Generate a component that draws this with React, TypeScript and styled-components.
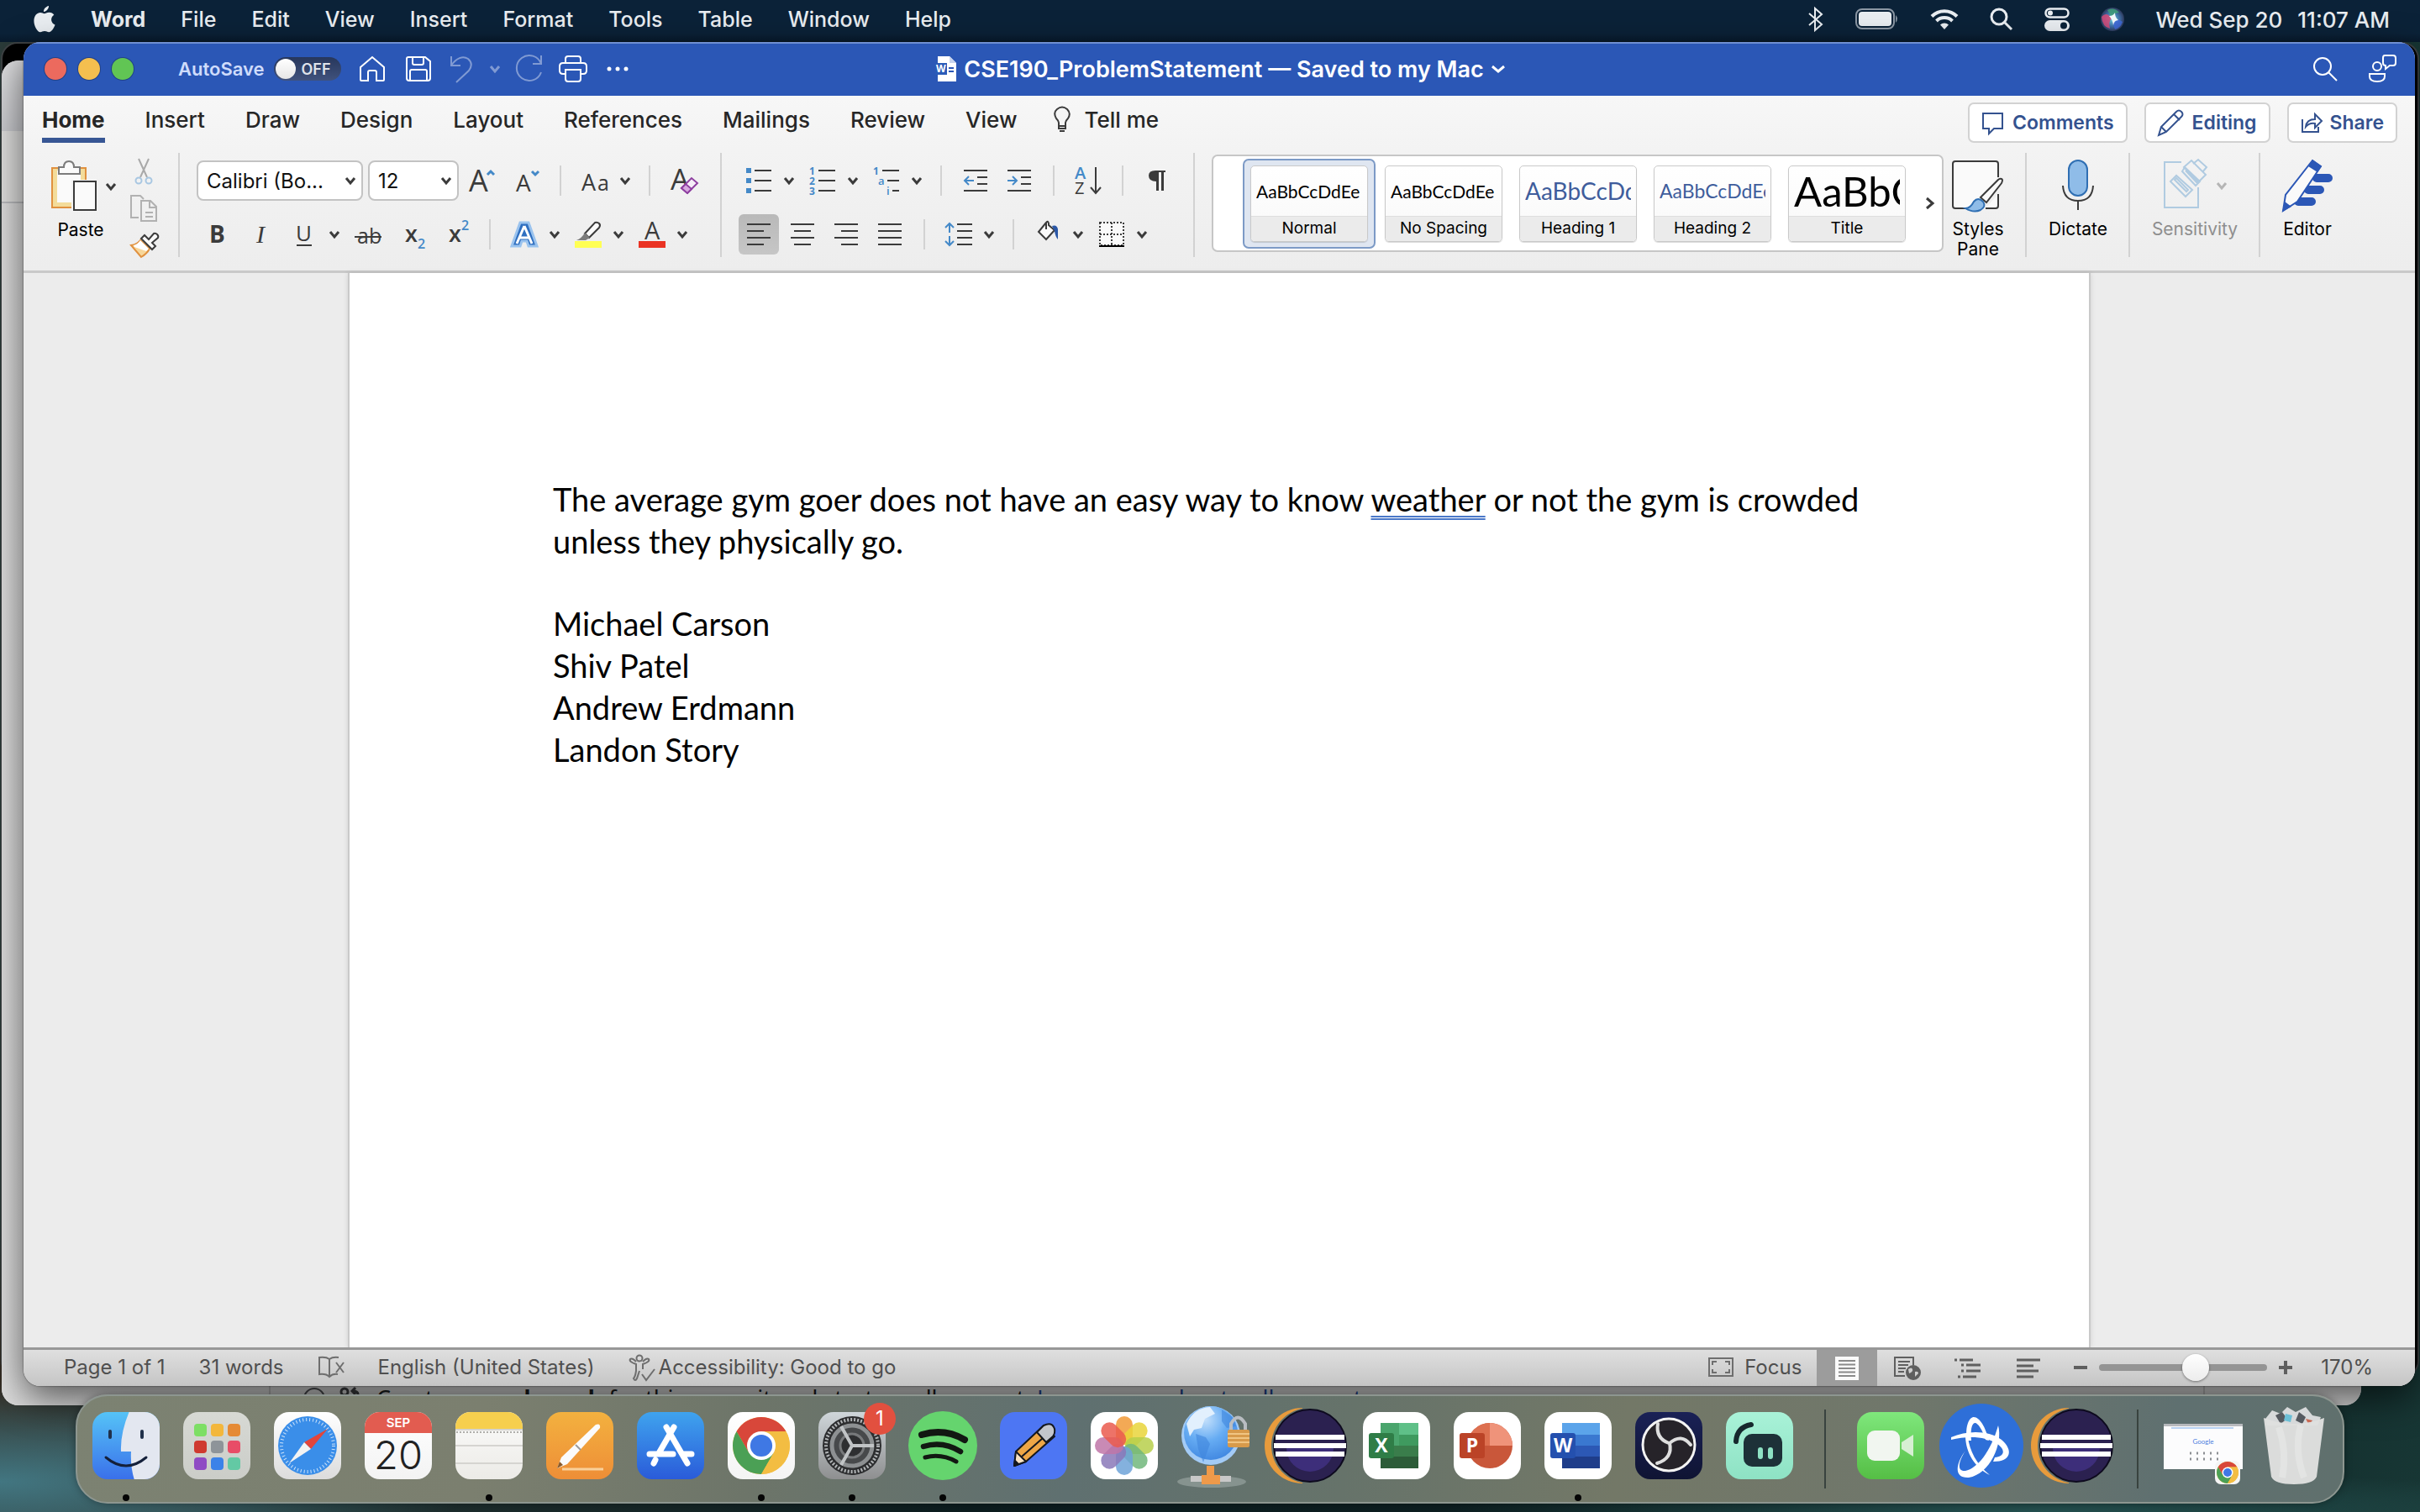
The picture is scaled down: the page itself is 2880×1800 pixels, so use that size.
import React from "react";
import styled, { createGlobalStyle, css } from "styled-components";

const ui = `Inter, "Liberation Sans", sans-serif`;
const doc = `Lato, "Open Sans", sans-serif`;
const ink = "#3b3b3b";
const blue = "#4489c8";
const brand = "#2b57b6";

const GlobalStyle = createGlobalStyle`
  * { box-sizing: border-box; }
  html, body, #root { height: 100%; }
  body { margin: 0; overflow: hidden; font-family: ${ui}; font-size: 24px; background: #0c1c1e; }
  button, select, input { font: inherit; color: inherit; margin: 0; padding: 0; border: 0; background: none; }
  svg { display: block; flex: none; overflow: visible; }
  a { color: inherit; text-decoration: none; }
  p, h1 { margin: 0; font: inherit; }
`;

/* ---------- Desktop ---------- */

const Desktop = styled.div`
  position: relative;
  height: 100%;
  min-height: 900px;
  overflow: hidden;
  background:
    radial-gradient(ellipse 560px 120px at 0% 98%, #427681 0%, rgba(66, 118, 129, 0) 100%),
    radial-gradient(ellipse 700px 50px at 84% 100%, #24504f 0%, rgba(36, 80, 79, 0) 100%),
    radial-gradient(ellipse 400px 200px at 0% 92%, #33291f 0%, rgba(51, 41, 31, 0) 100%),
    linear-gradient(90deg, #2a3a38 0%, #0c1c1e 40%, #0d2022 80%, #173634 100%);
`;

const MenuBar = styled.header`
  display: flex;
  justify-content: space-between;
  align-items: center;
  height: 50px;
  padding: 0 36px 4px 40px;
  background: linear-gradient(#0b2238 80%, #081a2c);
  color: #e9edf1;
  font-size: 25px;
  font-weight: 500;
`;

const MenuGroup = styled.nav<{ $gap: number }>`
  display: flex;
  align-items: center;
  gap: ${(p) => p.$gap}px;
  white-space: nowrap;
`;

const MenuItem = styled.button<{ $strong?: boolean }>`
  font-weight: ${(p) => (p.$strong ? 700 : 500)};
`;

const Clock = styled.time`
  display: flex;
  gap: 18px;
  font-size: 26px;
`;

const WindowFrame = styled.section`
  position: absolute;
  overflow: hidden;
  border-radius: 20px;
`;

const DarkWindow = styled(WindowFrame)`
  top: 50px;
  left: 1px;
  right: 1px;
  bottom: 160px;
  background: #000;
  border: 2px solid #3d4143;
`;

const BrowserWindow = styled(WindowFrame)`
  top: 72px;
  left: 2px;
  right: 70px;
  bottom: 127px;
  display: flex;
  flex-direction: column;
  background: #d3d4d8;
`;

const BrowserTabs = styled.div`
  height: 84px;
  flex: none;
  background: linear-gradient(#e0e0e2, #c9cace);
`;

const BrowserToolbar = styled.div`
  height: 86px;
  flex: none;
  background: #dededd;
  border-bottom: 2px solid #b9babd;
`;

const BrowserBody = styled.div`
  flex: 1;
  display: grid;
  grid-template-columns: 318px minmax(0, 1fr) 188px;
  background: linear-gradient(90deg, #dcdcdc, #d0d0d0 160px);
`;

const BrowserColumn = styled.div`
  display: flex;
  align-items: flex-end;
  padding: 0 0 0 38px;
  border-left: 2px solid #b2b2b2;
  &:first-child { border-left: 0; }
`;

const CommitChoice = styled.p`
  display: flex;
  align-items: center;
  gap: 16px;
  height: 38px;
  margin-bottom: -11px;
  font-family: "Noto Sans", sans-serif;
  font-size: 27px;
  line-height: 38px;
  white-space: nowrap;
  color: #1b1d20;
  a { color: #1d4490; }
`;

/* ---------- Word window ---------- */

const WordWindow = styled(WindowFrame)`
  top: 50px;
  left: 28px;
  right: 6px;
  bottom: 150px;
  display: flex;
  flex-direction: column;
  background: #ececec;
  box-shadow: 0 14px 44px rgba(0, 0, 0, 0.6), 0 0 2px rgba(0, 0, 0, 0.7);
`;

const TitleBar = styled.div`
  display: grid;
  grid-template-columns: 1fr auto 1fr;
  align-items: center;
  height: 64px;
  flex: none;
  padding: 0 22px 2px 25px;
  border-top: 2px solid #6f8fd2;
  background: ${brand};
  color: #fff;
`;

const TitleLeft = styled.div`
  display: flex;
  align-items: center;
  gap: 53px;
`;

const Lights = styled.div`
  display: flex;
  gap: 14px;
`;

const Light = styled.button<{ $color: string }>`
  width: 26px;
  height: 26px;
  border-radius: 50%;
  background: ${(p) => p.$color};
  box-shadow: 0 0 0 1px rgba(0, 0, 0, 0.25);
`;

const QuickTools = styled.div`
  display: flex;
  align-items: center;
  gap: 5px;
`;

const AutoSaveLabel = styled.label`
  display: flex;
  align-items: center;
  gap: 11px;
  color: #cfdcfb;
  font-size: 22px;
  font-weight: 600;
`;

const Toggle = styled.input`
  appearance: none;
  display: flex;
  align-items: center;
  width: 80px;
  height: 28px;
  border-radius: 14px;
  background: linear-gradient(#27375c, #40527d);
  &::before {
    content: "";
    width: 24px;
    height: 24px;
    margin: 0 7px 0 2px;
    border-radius: 50%;
    background: linear-gradient(#fff, #e6e6e6);
  }
  &::after {
    content: "OFF";
    color: #dfe3ea;
    font-size: 18px;
    font-weight: 600;
  }
`;

const TitleButton = styled.button<{ $w: number; $dim?: boolean }>`
  display: flex;
  justify-content: center;
  width: ${(p) => p.$w}px;
  opacity: ${(p) => (p.$dim ? 0.4 : 1)};
`;

const DocTitle = styled.h1`
  display: flex;
  align-items: center;
  gap: 8px;
  font-size: 27px;
  font-weight: 600;
  white-space: nowrap;
`;

const TitleRight = styled.div`
  display: flex;
  justify-content: flex-end;
  align-items: center;
  gap: 36px;
`;

const RibbonTop = styled.div`
  display: flex;
  justify-content: space-between;
  align-items: flex-start;
  height: 64px;
  flex: none;
  padding: 0 21px 0 22px;
  background: linear-gradient(#f7f7f7, #f3f3f3);
`;

const Tabs = styled.nav`
  display: flex;
  gap: 48px;
`;

const Tab = styled.button<{ $active?: boolean }>`
  display: flex;
  align-items: center;
  gap: 14px;
  height: 56px;
  color: #262626;
  font-size: 26px;
  font-weight: ${(p) => (p.$active ? 700 : 500)};
  white-space: nowrap;
  border-top: 6px solid transparent;
  border-bottom: 6px solid transparent;
  ${(p) =>
    p.$active &&
    css`
      border-image: linear-gradient(transparent 50%, #375694 50%) 6;
    `}
`;

const TellMe = styled(Tab)`
  margin-left: -6px;
`;

const Actions = styled.div`
  display: flex;
  gap: 20px;
  padding-top: 8px;
`;

const ActionButton = styled.button`
  display: flex;
  align-items: center;
  gap: 9px;
  height: 48px;
  padding: 0 14px;
  border: 2px solid #d2d2d2;
  border-radius: 7px;
  background: #fff;
  color: #34528f;
  font-size: 23px;
  font-weight: 600;
`;

const Ribbon = styled.div`
  display: flex;
  height: 147px;
  flex: none;
  padding: 4px 0 16px;
  background: linear-gradient(#f3f3f3, #ededed);
  border-bottom: 3px solid #c9c9c9;
`;

const Group = styled.div`
  display: flex;
  align-items: flex-start;
  gap: 5px;
  padding: 0 19px 0 20px;
  border-right: 2px solid #d2d2d2;
  &:last-child { border-right: 0; }
`;

const Rows = styled.div`
  display: flex;
  flex-direction: column;
  gap: 16px;
  padding-top: 9px;
`;

const Row = styled.div`
  display: flex;
  align-items: center;
  gap: 4px;
  height: 48px;
`;

const Tool = styled.button<{ $on?: boolean }>`
  display: flex;
  align-items: center;
  justify-content: center;
  width: 48px;
  height: 48px;
  border-radius: 6px;
  background: ${(p) => (p.$on ? "linear-gradient(#b9b9b9, #c6c6c6)" : "none")};
`;

const Split = styled.div`
  display: flex;
  align-items: center;
`;

const DropArrow = styled.button`
  display: flex;
  align-items: center;
  justify-content: center;
  width: 24px;
  height: 48px;
`;

const Divider = styled.span`
  width: 26px;
  height: 36px;
  background: linear-gradient(#d2d2d2, #d2d2d2) center / 2px 100% no-repeat;
`;

const Combos = styled.div`
  display: flex;
  gap: 6px;
`;

const Combo = styled.label<{ $w: number }>`
  position: relative;
  display: flex;
  align-items: center;
  width: ${(p) => p.$w}px;
  height: 48px;
  svg { position: absolute; right: 8px; pointer-events: none; }
`;

const ComboSelect = styled.select`
  appearance: none;
  width: 100%;
  height: 100%;
  padding: 0 30px 0 10px;
  border: 2px solid #c3c3c3;
  border-radius: 8px;
  background: #fff;
  color: #111;
  font-size: 24px;
`;

const PasteButton = styled.button`
  display: flex;
  flex-direction: column;
  align-items: center;
  gap: 8px;
  width: 96px;
  padding-top: 9px;
  font-size: 21px;
  color: #000;
`;

const ClipTools = styled.div`
  display: flex;
  flex-direction: column;
  align-items: center;
  gap: 10px;
  width: 44px;
  padding-top: 5px;
`;

const ClipTool = styled(Tool)`
  width: 44px;
  height: 34px;
`;

const StylesGroup = styled(Group)`
  gap: 4px;
`;

const Gallery = styled.div`
  display: flex;
  align-items: center;
  gap: 2px;
  height: 116px;
  margin-top: 2px;
  padding: 0 8px 0 35px;
  border: 2px solid #c6c6c6;
  border-radius: 7px;
  background: #fff;
`;

const StyleCard = styled.button<{ $on?: boolean }>`
  width: 158px;
  height: 107px;
  padding: 6px 7px;
  border: 2px solid ${(p) => (p.$on ? "#7c9ac6" : "transparent")};
  border-radius: 7px;
  background: ${(p) => (p.$on ? "#dfe6f1" : "none")};
`;

const CardInner = styled.span`
  display: grid;
  grid-template-rows: 1fr 30px;
  height: 91px;
  overflow: hidden;
  border: 1px solid #c9c9c9;
  border-radius: 5px;
  background: linear-gradient(#fff, #f8f8f8);
  box-shadow: 0 1px 1px rgba(0, 0, 0, 0.15);
`;

const Sample = styled.span<{ $size: number; $color: string }>`
  display: flex;
  align-items: center;
  margin: 0 6px;
  overflow: hidden;
  white-space: nowrap;
  font-family: ${doc};
  font-size: ${(p) => p.$size}px;
  color: ${(p) => p.$color};
`;

const CardLabel = styled.span`
  border-top: 1px solid #dedede;
  background: #ebebeb;
  color: #000;
  font-size: 19px;
  line-height: 28px;
  text-align: center;
`;

const GalleryNext = styled.button`
  padding-left: 12px;
`;

const BigTool = styled.button<{ $w: number; $dim?: boolean }>`
  display: flex;
  flex-direction: column;
  align-items: center;
  gap: 8px;
  width: ${(p) => p.$w}px;
  padding-top: 7px;
  color: ${(p) => (p.$dim ? "#8e8e8e" : "#000")};
  font-size: 21px;
  line-height: 24px;
`;

const IconRow = styled.span`
  display: flex;
  align-items: center;
  gap: 9px;
`;

const PasteIcons = styled(IconRow)`
  padding-left: 7px;
`;

/* ---------- Document ---------- */

const Canvas = styled.main`
  display: flex;
  justify-content: center;
  flex: 1;
  min-height: 0;
  padding: 0 20px;
  background: #ececec;
`;

const Page = styled.article`
  width: 100%;
  max-width: 2074px;
  padding: 244px 243px 0 242px;
  border: 2px solid #c9c9c9;
  border-width: 0 2px;
  background: #fff;
  box-shadow: 0 0 6px rgba(0, 0, 0, 0.12);
  color: #000;
  font-family: ${doc};
  font-size: 38px;
  line-height: 50px;
`;

const BlankLine = styled.p`
  height: 48px;
`;

const Grammar = styled.span`
  text-decoration: underline double #4a78c8;
  text-decoration-thickness: 2px;
  text-underline-offset: 5px;
`;

/* ---------- Status bar ---------- */

const StatusBar = styled.footer`
  display: flex;
  justify-content: space-between;
  height: 46px;
  flex: none;
  padding: 0 50px 2px 48px;
  border-top: 3px solid #989898;
  background: linear-gradient(#dfdfdf, #c5c5c5);
  color: #4f4f4f;
  font-size: 24px;
`;

const StatusSide = styled.div<{ $gap: number }>`
  display: flex;
  align-items: center;
  gap: ${(p) => p.$gap}px;
  white-space: nowrap;
`;

const StatusButton = styled.button<{ $gap?: number }>`
  display: flex;
  align-items: center;
  gap: ${(p) => p.$gap || 0}px;
`;

const Views = styled.div`
  display: flex;
  align-self: stretch;
  margin-bottom: -2px;
`;

const ViewButton = styled.button<{ $on?: boolean }>`
  display: flex;
  align-items: center;
  justify-content: center;
  width: 72px;
  background: ${(p) => (p.$on ? "#9c9c9c" : "none")};
`;

const ZoomControls = styled.div`
  display: flex;
  align-items: center;
  gap: 14px;
`;

const ZoomValue = styled(StatusButton)`
  padding-left: 20px;
`;

const ZoomSlider = styled.input`
  appearance: none;
  width: 200px;
  height: 32px;
  &::-webkit-slider-runnable-track {
    height: 8px;
    border-radius: 4px;
    background: #949494;
  }
  &::-webkit-slider-thumb {
    appearance: none;
    width: 32px;
    height: 32px;
    margin-top: -12px;
    border-radius: 50%;
    background: linear-gradient(#fff, #ececec);
    box-shadow: 0 1px 3px rgba(0, 0, 0, 0.45);
  }
`;

/* ---------- Dock ---------- */

const DockArea = styled.aside`
  position: absolute;
  left: 0;
  right: 0;
  bottom: 10px;
  display: flex;
  justify-content: center;
`;

const Dock = styled.div`
  display: flex;
  height: 130px;
  padding: 0 4px;
  border: 2px solid #8d9690;
  border-radius: 38px;
  background: linear-gradient(100deg, #7c8272 0%, #7b7f6f 18%, #6d7569 30%, #5f7070 44%, #66736a 56%, #737867 68%, #70776b 80%, #5f7070 92%, #60706d 100%);
  box-shadow: 0 0 10px rgba(0, 0, 0, 0.35);
`;

const DockItem = styled.button`
  position: relative;
  display: flex;
  align-items: center;
  justify-content: center;
  width: 108px;
  height: 118px;
`;

const RunningDot = styled.span`
  position: absolute;
  bottom: -7px;
  width: 8px;
  height: 8px;
  border-radius: 50%;
  background: #050505;
`;

const DockRule = styled.span`
  width: 48px;
  height: 94px;
  margin-top: 16px;
  background: linear-gradient(#39433f, #39433f) center / 2px 100% no-repeat;
`;

const AlertBadge = styled.span`
  position: absolute;
  top: 8px;
  right: 2px;
  width: 38px;
  height: 38px;
  border-radius: 50%;
  background: #e2503f;
  color: #fff;
  font-size: 24px;
  line-height: 38px;
  text-align: center;
`;

/* ---------- Small icons ---------- */

type IconProps = { w?: number; h?: number; children: React.ReactNode; stroke?: string; sw?: number };

const Icon = ({ w = 32, h = 32, children, stroke = ink, sw = 2 }: IconProps) => (
  <svg width={w} height={h} viewBox={`0 0 ${w} ${h}`} fill="none" stroke={stroke} strokeWidth={sw}>
    {children}
  </svg>
);

const Chevron = ({ color = ink }: { color?: string }) => (
  <Icon w={14} h={10} stroke={color} sw={3}>
    <path d="M2 2l5 6 5-6" />
  </Icon>
);

const Glyph = ({ x, y, size, fill = ink, weight = 400, children, italic, family }: any) => (
  <text
    x={x}
    y={y}
    fontSize={size}
    fill={fill}
    stroke="none"
    fontWeight={weight}
    fontStyle={italic ? "italic" : "normal"}
    fontFamily={family || "Open Sans, Noto Sans, sans-serif"}
  >
    {children}
  </text>
);

const Lines = ({ rows }: { rows: [number, number, number][] }) => (
  <>
    {rows.map(([x1, x2, y]) => (
      <path key={y} d={`M${x1} ${y}H${x2}`} />
    ))}
  </>
);

const DropButton = ({ label }: { label: string }) => (
  <DropArrow aria-label={label}>
    <Chevron />
  </DropArrow>
);

const align = {
  left: [[2, 30, 3], [2, 22, 11], [2, 30, 19], [2, 22, 27]],
  center: [[2, 30, 3], [6, 26, 11], [2, 30, 19], [6, 26, 27]],
  right: [[2, 30, 3], [10, 30, 11], [2, 30, 19], [10, 30, 27]],
  justify: [[2, 30, 3], [2, 30, 11], [2, 30, 19], [2, 30, 27]],
} as Record<string, [number, number, number][]>;

/* ---------- Menu bar ---------- */

const menus = ["File", "Edit", "View", "Insert", "Format", "Tools", "Table", "Window", "Help"];

const Menu = () => (
  <MenuBar>
    <MenuGroup $gap={42} aria-label="Application menu">
      <MenuItem aria-label="Apple">
        <svg width="26" height="32" viewBox="0 0 26 32" fill="#e9edf1">
          <path d="M18 0c.3 3-2.600 6.800-6 7C11.600 3.800 14.800.6 18 0zM12.700 9.200c1.500 0 3.300-1.700 6-1.500 2.300.1 4.400 1.200 5.600 3-4.800 3-4 9.600 1.200 11.700-.8 2.600-4 8.800-7.300 8.800-2 0-2.800-1.200-5.100-1.200-2.400 0-3.300 1.200-5.200 1.200C4.400 31.200.4 24 .4 18c0-6.400 3.900-10 7.600-10 2.200 0 3.500 1.200 4.700 1.200z" />
        </svg>
      </MenuItem>
      <MenuItem $strong>Word</MenuItem>
      {menus.map((m) => (
        <MenuItem key={m}>{m}</MenuItem>
      ))}
    </MenuGroup>
    <MenuGroup $gap={37} aria-label="Status menu">
      <Icon w={20} h={32} stroke="#e9edf1" sw={2}>
        <path d="M2 9l15 13-8 7V3l8 7L2 23" />
      </Icon>
      <svg width="52" height="26" viewBox="0 0 52 26">
        <rect x="1" y="1" width="45" height="23" rx="7" fill="none" stroke="#8b97a4" strokeWidth="2" />
        <rect x="4" y="4" width="39" height="17" rx="4" fill="#e9edf1" />
        <path d="M48 8q4 4 0 9z" fill="#8b97a4" />
      </svg>
      <svg width="34" height="26" viewBox="0 0 34 26" fill="none" stroke="#e9edf1" strokeWidth="4">
        <path d="M2 9.500a21 21 0 0 1 30 0M7.500 15a13.500 13.500 0 0 1 19 0" />
        <path d="M17 25l-5-5.500a7 7 0 0 1 10 0z" fill="#e9edf1" stroke="none" />
      </svg>
      <Icon w={28} h={28} stroke="#e9edf1" sw={3}>
        <circle cx="11" cy="11" r="9" />
        <path d="M18 18l8 8" />
      </Icon>
      <svg width="30" height="28" viewBox="0 0 30 28">
        <rect x="1.500" y="1.500" width="27" height="10" rx="5" fill="none" stroke="#e9edf1" strokeWidth="2.500" />
        <circle cx="7" cy="6.500" r="3" fill="#e9edf1" />
        <rect x="0" y="15" width="30" height="13" rx="6.500" fill="#e9edf1" />
        <circle cx="23" cy="21.500" r="4" fill="#0b2238" />
      </svg>
      <svg width="28" height="28" viewBox="0 0 28 28">
        <defs>
          <radialGradient id="siri-base">
            <stop offset="0" stopColor="#6fd0dc" />
            <stop offset=".6" stopColor="#3f6fa8" />
            <stop offset="1" stopColor="#2e3a5c" />
          </radialGradient>
        </defs>
        <circle cx="14" cy="14" r="14" fill="url(#siri-base)" />
        <path d="M1 11q6-7 12 2-4 3-2 12-9-2-10-14z" fill="#d94a78" opacity=".85" />
        <path d="M8 3q8-4 14 3-6 0-9 6z" fill="#3f9f78" opacity=".85" />
        <path d="M14 14q6-2 12 3-3 8-9 9-3-6-3-12z" fill="#4068d8" opacity=".85" />
        <path d="M10 10q5 0 7-4 0 6 4 9-5 0-6 6-1-7-5-11z" fill="#f2fafc" />
      </svg>
      <Clock>
        <span>Wed Sep 20</span>
        <span>11:07 AM</span>
      </Clock>
    </MenuGroup>
  </MenuBar>
);

/* ---------- Title bar ---------- */

const WindowTitle = () => (
  <TitleBar>
    <TitleLeft>
      <Lights>
        <Light $color="#ec6a5e" aria-label="Close" />
        <Light $color="#f4bf4f" aria-label="Minimize" />
        <Light $color="#61c554" aria-label="Full screen" />
      </Lights>
      <QuickTools>
        <AutoSaveLabel>
          AutoSave
          <Toggle type="checkbox" />
        </AutoSaveLabel>
        <TitleButton $w={64} aria-label="Home">
          <Icon stroke="#fff">
            <path d="M2 14L16 2l14 12v15q0 1-1 1h-8V20q0-2-2-2h-6q-2 0-2 2v10H3q-1 0-1-1z" />
          </Icon>
        </TitleButton>
        <TitleButton $w={36} aria-label="Save">
          <Icon stroke="#fff">
            <path d="M4 2h20l6 5v20q0 3-3 3H5q-3 0-3-3V4q0-2 2-2zM9 2v7q0 2 2 2h9q2 0 2-2V2M6 30V19q0-2 2-2h16q2 0 2 2v11" />
          </Icon>
        </TitleButton>
        <TitleButton $w={56} $dim aria-label="Undo">
          <Icon w={28} h={34} stroke="#fff">
            <path d="M2 2v11h11M2 13C8 4 16 1 22 5q7 6 1 14L8 33" />
          </Icon>
        </TitleButton>
        <TitleButton $w={14} $dim aria-label="Undo history">
          <Chevron color="#fff" />
        </TitleButton>
        <TitleButton $w={56} $dim aria-label="Redo">
          <Icon w={34} h={34} stroke="#fff">
            <path d="M32 1v10H22M32 11A15 15 0 1 0 32 21" />
          </Icon>
        </TitleButton>
        <TitleButton $w={40} aria-label="Print">
          <Icon w={34} stroke="#fff">
            <path d="M8 22H5q-4 0-4-4v-5q0-4 4-4h24q4 0 4 4v5q0 4-4 4h-3M8 9V4q0-3 3-3h12q3 0 3 3v5M8 17h18v11q0 3-3 3H11q-3 0-3-3z" />
          </Icon>
        </TitleButton>
        <TitleButton $w={56} aria-label="More">
          <svg width="28" height="6" viewBox="0 0 28 6" fill="#fff">
            <circle cx="4" cy="3" r="2.500" />
            <circle cx="14" cy="3" r="2.500" />
            <circle cx="24" cy="3" r="2.500" />
          </svg>
        </TitleButton>
      </QuickTools>
    </TitleLeft>
    <DocTitle>
      <svg width="26" height="30" viewBox="0 0 26 30">
        <path d="M3 0h14l8 8v22H3z" fill="#fff" />
        <path d="M17 0v8h8" fill="#c9d5ee" />
        <path d="M16 14h6M16 18h6" stroke={brand} strokeWidth="2" />
        <rect y="8" width="14" height="14" fill="#2a5bb8" />
        <Glyph x={1} y={19} size={12} fill="#fff" weight={700}>W</Glyph>
      </svg>
      CSE190_ProblemStatement — Saved to my Mac
      <TitleButton $w={18} aria-label="Document options">
        <Icon w={18} h={10} stroke="#fff" sw={3}>
          <path d="M2 2l7 6 7-6" />
        </Icon>
      </TitleButton>
    </DocTitle>
    <TitleRight>
      <TitleButton $w={30} aria-label="Search">
        <Icon w={30} h={30} stroke="#fff">
          <circle cx="12" cy="12" r="10" />
          <path d="M19 19l10 10" />
        </Icon>
      </TitleButton>
      <TitleButton $w={34} aria-label="Collaborate">
        <Icon w={34} h={34} stroke="#fff">
          <circle cx="11" cy="14" r="5" />
          <path d="M2 23h18v3q0 6-9 6t-9-6zM20 1h10q3 0 3 3v6q0 3-3 3h-4l-5 4v-4q-3 0-3-3V4q0-3 2-3z" />
        </Icon>
      </TitleButton>
    </TitleRight>
  </TitleBar>
);

/* ---------- Ribbon ---------- */

const tabs = ["Home", "Insert", "Draw", "Design", "Layout", "References", "Mailings", "Review", "View"];

const RibbonTabs = () => (
  <RibbonTop>
    <Tabs>
      {tabs.map((t) => (
        <Tab key={t} $active={t === "Home"}>
          {t}
        </Tab>
      ))}
      <TellMe>
        <Icon w={24} h={32}>
          <path d="M8 24v-4q0-2-3-5-4-7 1-11 6-5 12 0 5 5 1 11-3 3-3 5v4zM8 24v3h8v-3M9 30h6" />
        </Icon>
        Tell me
      </TellMe>
    </Tabs>
    <Actions>
      <ActionButton>
        <Icon w={28} h={28} stroke="#34528f">
          <path d="M2 3h23v18H15l-6 6v-6H2z" />
        </Icon>
        Comments
      </ActionButton>
      <ActionButton>
        <Icon w={32} h={32} stroke="#34528f">
          <path d="M1 31l3-10L22 3q3-3 6 0t0 6L10 27zM4 21l6 6M19 6l7 7" />
        </Icon>
        Editing
      </ActionButton>
      <ActionButton>
        <Icon w={26} h={26} stroke="#34528f">
          <path d="M2 9v15h19v-6M6 18q1-9 11-9V3l8 8-8 8v-5q-7-1-11 4z" />
        </Icon>
        Share
      </ActionButton>
    </Actions>
  </RibbonTop>
);

const Clipboard = () => (
  <Group>
    <PasteButton>
      <PasteIcons>
        <svg width="56" height="62" viewBox="0 0 56 62" fill="none" strokeWidth="2">
          <path d="M25 56H2V9h40v17" stroke="#e0913f" fill="#f3dc9a" />
          <path d="M8 12h28v38H8z" fill="#fafafa" />
          <path d="M10 14V8h6q0-7 6-7t6 7h7v8H10z" fill="#fafafa" stroke="#7b7b7b" />
          <path d="M25 23h31v38H25z" fill="#f3f3f3" />
          <path d="M28 25h26v34H28z" fill="#fafafa" stroke={ink} />
        </svg>
        <Chevron />
      </PasteIcons>
      Paste
    </PasteButton>
    <ClipTools>
      <ClipTool aria-label="Cut">
        <Icon w={24} h={34} stroke="#a9a9a9">
          <path d="M6 2l10 22M18 2L8 24" />
          <circle cx="6" cy="28" r="3.500" stroke="#a8c7e2" />
          <circle cx="18" cy="28" r="3.500" stroke="#a8c7e2" />
        </Icon>
      </ClipTool>
      <ClipTool aria-label="Copy">
        <Icon w={34} h={34} stroke="#b1b1b1">
          <path d="M11 28H2V2h11l4 4M14 8h11l7 7v17H14zM24 8v8h8M19 22h9M19 27h9" />
        </Icon>
      </ClipTool>
      <ClipTool aria-label="Format painter">
        <Icon w={34} h={32}>
          <path d="M2 16q7-1 11-6l11 10q-3 6-10 10z" fill="#f8d79a" stroke="#e0913f" />
          <path d="M6 18l14 5 3-3L13 10q-3 5-8 6z" fill="#fff" stroke="none" />
          <path d="M14 8l4-4 5 5 6-7q2-1 4 1t1 4l-7 6 4 4-4 4z" fill="#fafafa" />
        </Icon>
      </ClipTool>
    </ClipTools>
  </Group>
);

const FontGroup = () => (
  <Group>
    <Rows>
      <Row>
        <Combos>
          <Combo $w={198}>
            <ComboSelect aria-label="Font">
              <option>Calibri (Bo...</option>
            </ComboSelect>
            <Chevron />
          </Combo>
          <Combo $w={108}>
            <ComboSelect aria-label="Font size">
              <option>12</option>
            </ComboSelect>
            <Chevron />
          </Combo>
        </Combos>
        <Tool aria-label="Increase font size">
          <Icon w={36}>
            <Glyph x={2} y={29} size={36}>A</Glyph>
            <path d="M24 9l4-4 4 4" stroke={blue} strokeWidth={3} />
          </Icon>
        </Tool>
        <Tool aria-label="Decrease font size">
          <Icon w={36}>
            <Glyph x={6} y={29} size={28}>A</Glyph>
            <path d="M25 5l4 4 4-4" stroke={blue} strokeWidth={3} />
          </Icon>
        </Tool>
        <Divider />
        <Split>
          <Tool aria-label="Change case">
            <Icon w={36}>
              <Glyph x={2} y={28} size={27}>A</Glyph>
              <Glyph x={21} y={28} size={25}>a</Glyph>
            </Icon>
          </Tool>
          <DropButton label="Change case options" />
        </Split>
        <Divider />
        <Tool aria-label="Clear formatting">
          <Icon w={34} h={34}>
            <Glyph x={1} y={28} size={35}>A</Glyph>
            <path d="M14 26l12-12 7 6-12 12z" fill="#f6eef8" stroke="#8e3fa0" />
            <path d="M14 26l5-5 7 6-5 5z" fill="#d7a9e0" stroke="#8e3fa0" />
          </Icon>
        </Tool>
      </Row>
      <Row>
        <Tool aria-label="Bold">
          <Icon>
            <Glyph x={7} y={26} size={28} weight={700}>B</Glyph>
          </Icon>
        </Tool>
        <Tool aria-label="Italic">
          <Icon>
            <Glyph x={11} y={26} size={30} italic family="Liberation Serif, serif">I</Glyph>
          </Icon>
        </Tool>
        <Split>
          <Tool aria-label="Underline">
            <Icon>
              <Glyph x={6} y={24} size={26}>U</Glyph>
              <path d="M7 29h18" />
            </Icon>
          </Tool>
          <DropButton label="Underline styles" />
        </Split>
        <Tool aria-label="Strikethrough">
          <Icon>
            <Glyph x={3} y={27} size={25}>ab</Glyph>
            <path d="M0 19h32" />
          </Icon>
        </Tool>
        <Tool aria-label="Subscript">
          <Icon w={36} h={36}>
            <Glyph x={10} y={27} size={27} weight={600}>x</Glyph>
            <Glyph x={25} y={35} size={16} fill={blue} weight={600}>2</Glyph>
          </Icon>
        </Tool>
        <Tool aria-label="Superscript">
          <Icon w={36} h={36}>
            <Glyph x={10} y={27} size={27} weight={600}>x</Glyph>
            <Glyph x={25} y={13} size={16} fill={blue} weight={600}>2</Glyph>
          </Icon>
        </Tool>
        <Divider />
        <Split>
          <Tool aria-label="Text effects">
            <svg width="32" height="32" viewBox="0 0 32 32" strokeLinejoin="miter">
              <path d="M11 2h10l10 28H21l-2-6h-6l-2 6H1z" fill="#2f6fc0" stroke="#9ac3ee" strokeWidth="3" />
              <path d="M16 6L7 27M16 6l9 21M10 20h12" stroke="#fff" strokeWidth="3" fill="none" />
            </svg>
          </Tool>
          <DropButton label="Text effect options" />
        </Split>
        <Split>
          <Tool aria-label="Highlight">
            <Icon>
              <path d="M12 15L24 2q3-1 5 1t0 5L17 20z" fill="#fafafa" />
              <path d="M12 14l6 6-5 3H2q6-2 10-9z" fill="#7b7b7b" stroke="none" />
              <path d="M0 24h32v8H0z" fill="#ffff54" stroke="none" />
            </Icon>
          </Tool>
          <DropButton label="Highlight colors" />
        </Split>
        <Split>
          <Tool aria-label="Font color">
            <Icon>
              <Glyph x={7} y={22} size={29}>A</Glyph>
              <path d="M0 24h32v8H0z" fill="#ea3323" stroke="none" />
            </Icon>
          </Tool>
          <DropButton label="Font colors" />
        </Split>
      </Row>
    </Rows>
  </Group>
);

const ParagraphGroup = () => (
  <Group>
    <Rows>
      <Row>
        <Split>
          <Tool aria-label="Bullets">
            <Icon>
              <path d="M1 1h6v6H1zM1 13h6v6H1zM1 25h6v6H1z" fill={blue} stroke="none" />
              <Lines rows={[[11, 31, 4], [11, 31, 16], [11, 31, 28]]} />
            </Icon>
          </Tool>
          <DropButton label="Bullet styles" />
        </Split>
        <Split>
          <Tool aria-label="Numbering">
            <Icon h={34}>
              <Glyph x={0} y={10} size={12} weight={700} fill={blue}>1</Glyph>
              <Glyph x={0} y={22} size={12} weight={700} fill={blue}>2</Glyph>
              <Glyph x={0} y={34} size={12} weight={700} fill={blue}>3</Glyph>
              <Lines rows={[[11, 31, 5], [11, 31, 17], [11, 31, 29]]} />
            </Icon>
          </Tool>
          <DropButton label="Number styles" />
        </Split>
        <Split>
          <Tool aria-label="Multilevel list">
            <Icon h={34}>
              <Glyph x={0} y={10} size={12} weight={700} fill={blue}>1</Glyph>
              <Glyph x={6} y={22} size={13} weight={600} fill={blue}>a</Glyph>
              <Glyph x={16} y={34} size={13} weight={600} fill={blue}>i</Glyph>
              <Lines rows={[[11, 31, 5], [17, 31, 17], [23, 31, 29]]} />
            </Icon>
          </Tool>
          <DropButton label="Multilevel styles" />
        </Split>
        <Divider />
        <Tool aria-label="Decrease indent">
          <Icon>
            <Lines rows={[[2, 30, 4], [18, 30, 12], [18, 30, 20], [2, 30, 28]]} />
            <path d="M14 16H3M8 11l-5 5 5 5" stroke={blue} />
          </Icon>
        </Tool>
        <Tool aria-label="Increase indent">
          <Icon>
            <Lines rows={[[2, 30, 4], [18, 30, 12], [18, 30, 20], [2, 30, 28]]} />
            <path d="M2 16h11M8 11l5 5-5 5" stroke={blue} />
          </Icon>
        </Tool>
        <Divider />
        <Tool aria-label="Sort">
          <Icon h={34}>
            <Glyph x={0} y={15} size={20} weight={600} fill={blue}>A</Glyph>
            <Glyph x={0} y={33} size={20}>Z</Glyph>
            <path d="M25 1v31M19 25l6 7 6-7" />
          </Icon>
        </Tool>
        <Divider />
        <Tool aria-label="Show formatting marks">
          <svg width="24" height="28" viewBox="0 0 24 28" fill={ink}>
            <path d="M10 2h12v2h-2v22h-3V4h-3v22h-3V15q-9 0-9-7 0-6 8-6z" />
          </svg>
        </Tool>
      </Row>
      <Row>
        <Tool $on aria-label="Align left"><Icon h={30}><Lines rows={align.left} /></Icon></Tool>
        <Tool aria-label="Align center"><Icon h={30}><Lines rows={align.center} /></Icon></Tool>
        <Tool aria-label="Align right"><Icon h={30}><Lines rows={align.right} /></Icon></Tool>
        <Tool aria-label="Justify"><Icon h={30}><Lines rows={align.justify} /></Icon></Tool>
        <Divider />
        <Split>
          <Tool aria-label="Line spacing">
            <Icon h={30}>
              <Lines rows={[[14, 32, 3], [14, 32, 11], [14, 32, 19], [14, 32, 27]]} />
              <path d="M5 13V3M0 7l5-5 5 5M5 17v11M0 23l5 5 5-5" stroke={blue} />
            </Icon>
          </Tool>
          <DropButton label="Line spacing options" />
        </Split>
        <Divider />
        <Split>
          <Tool aria-label="Shading">
            <Icon h={40}>
              <path d="M14 6L5 17l9 9 10-11-7-6V7q-1-4-3-1v8" fill="#fafafa" />
              <path d="M21 10q6-2 7 4v12q-3-3-4-10z" fill="#2b57a6" stroke="none" />
            </Icon>
          </Tool>
          <DropButton label="Shading colors" />
        </Split>
        <Split>
          <Tool aria-label="Borders">
            <Icon>
              <path d="M2 2h28v27H2zM16 2v27M2 16h28" fill="#fafafa" strokeDasharray="2 2" />
              <path d="M1 30h30" stroke="#000" />
            </Icon>
          </Tool>
          <DropButton label="Border options" />
        </Split>
      </Row>
    </Rows>
  </Group>
);

const cards = [
  { name: "Normal", text: "AaBbCcDdEe", size: 21, color: "#000" },
  { name: "No Spacing", text: "AaBbCcDdEe", size: 21, color: "#000" },
  { name: "Heading 1", text: "AaBbCcDdEe", size: 28, color: "#3f5d9c" },
  { name: "Heading 2", text: "AaBbCcDdEe", size: 23, color: "#3f5d9c" },
  { name: "Title", text: "AaBbCcDdEe", size: 49, color: "#000" },
];

const Styles = () => (
  <StylesGroup>
    <Gallery>
      {cards.map((c) => (
        <StyleCard key={c.name} $on={c.name === "Normal"}>
          <CardInner>
            <Sample $size={c.size} $color={c.color}>
              {c.text}
            </Sample>
            <CardLabel>{c.name}</CardLabel>
          </CardInner>
        </StyleCard>
      ))}
      <GalleryNext aria-label="More styles">
        <Icon w={12} h={16} sw={3}>
          <path d="M2 2l7 6-7 6" />
        </Icon>
      </GalleryNext>
    </Gallery>
    <BigTool $w={74}>
      <Icon w={62} h={64} stroke={ink}>
        <path d="M20 59H4q-3 0-3-3V6q0-3 3-3h48q3 0 3 3v16M55 42v14q0 3-3 3H40" fill="#fafafa" />
        <path d="M59 24q2 1 0 5L41 52l-7-6 21-21q2-2 4-1z" fill="#fafafa" />
        <path d="M16 59q6 0 10-8 5-6 11 0 4 6-3 10-8 4-18-2z" fill="#8fbce8" stroke="#2f6fb3" />
      </Icon>
      Styles Pane
    </BigTool>
  </StylesGroup>
);

const RibbonTools = () => (
  <Ribbon>
    <Clipboard />
    <FontGroup />
    <ParagraphGroup />
    <Styles />
    <Group>
      <BigTool $w={82}>
        <Icon w={40} h={64}>
          <rect x="9" y="2" width="22" height="42" rx="11" fill="#8fbce8" stroke="#2f6fb3" />
          <path d="M2 32q1 18 18 18t18-18M20 50v11" />
        </Icon>
        Dictate
      </BigTool>
    </Group>
    <Group>
      <BigTool $w={114} $dim>
        <IconRow>
          <Icon w={54} h={64} stroke="#b0cbe1">
            <path d="M22 4H2v54h40V34" />
            <path d="M25 10l9-8 17 17-9 9zM36 6l6-5 10 9-5 6M26 10l18 17-5 5-16-17zM16 20l-7 7 18 18 8-8z" />
            <path d="M14 25l14 14 2-2-14-14zM27 14l14 15" />
          </Icon>
          <Chevron color="#b5b5b5" />
        </IconRow>
        Sensitivity
      </BigTool>
    </Group>
    <Group>
      <BigTool $w={72}>
        <svg width="62" height="64" viewBox="0 0 62 64">
          <g stroke={brand} strokeWidth="10" strokeLinecap="round">
            <path d="M42 23h14M32 37h14M20 51h16" />
          </g>
          <path d="M37 2l10 7L19 51 2 62l3-19z" fill="#fafafa" stroke={brand} strokeWidth="2" />
          <path d="M37 1l11 8-5 7-11-7zM1 63l3-12 8 6z" fill={brand} />
        </svg>
        Editor
      </BigTool>
    </Group>
  </Ribbon>
);

/* ---------- Status bar ---------- */

const Status = () => (
  <StatusBar>
    <StatusSide $gap={40}>
      <StatusButton>Page 1 of 1</StatusButton>
      <StatusButton>31 words</StatusButton>
      <StatusButton aria-label="Spelling">
        <Icon w={32} h={30} stroke="#6e6e6e">
          <path d="M14 5v20M14 5q-4-3-12-2v20q8-1 12 3 4-4 10-3M14 5q4-3 11-2M22 9l9 12M31 9l-9 12" />
        </Icon>
      </StatusButton>
      <StatusButton>English (United States)</StatusButton>
      <StatusButton $gap={4}>
        <Icon w={32} h={32} stroke="#6e6e6e">
          <circle cx="13" cy="5" r="3.500" />
          <path d="M9 9Q4 4 2 6q-2 3 7 6v8q-1 7-3 9 2 4 4 0l3-9M17 9q5-5 7-3 2 3-7 6v6M16 24l5 7 10-13" />
        </Icon>
        Accessibility: Good to go
      </StatusButton>
    </StatusSide>
    <StatusSide $gap={18}>
      <StatusButton $gap={12}>
        <Icon w={32} h={26} stroke="#6e6e6e">
          <path d="M2 2h28v21H2zM6 10V6h5M21 6h5v4M26 15v4h-5M11 19H6v-4" />
        </Icon>
        Focus
      </StatusButton>
      <Views>
        <ViewButton $on aria-label="Print layout">
          <svg width="28" height="28" viewBox="0 0 28 28">
            <path d="M0 0h28v28H0z" fill="#fafafa" />
            <path d="M4 5h20M4 9.500h20M4 14h20M4 18.500h20M4 23h20" stroke="#8a8a8a" strokeWidth="2" />
          </svg>
        </ViewButton>
        <ViewButton aria-label="Web layout">
          <Icon w={34} h={30} stroke="#5f5f5f">
            <path d="M14 24H2V2h22v9M6 7h14M6 11h12M6 15h9M6 19h7" />
            <circle cx="24" cy="20" r="8" fill="#5f5f5f" />
            <path d="M18 16q4-3 5 0t-4 5zM26 19q4-1 4 2l-4 4z" fill="#cfcfcf" stroke="none" />
          </Icon>
        </ViewButton>
        <ViewButton aria-label="Outline">
          <Icon w={32} h={26} stroke="#5f5f5f" sw={3}>
            <path d="M0 3h3M6 3h16M8 9h3M14 9h17M8 16h3M14 16h17M4 23h3M10 23h16" />
          </Icon>
        </ViewButton>
        <ViewButton aria-label="Draft">
          <Icon w={32} h={26} stroke="#5f5f5f" sw={3}>
            <path d="M2 3h28M2 10h20M2 16h26M2 23h20" />
          </Icon>
        </ViewButton>
      </Views>
      <ZoomControls>
        <StatusButton aria-label="Zoom out">
          <Icon w={16} h={16} stroke="#5f5f5f" sw={4}>
            <path d="M0 8h16" />
          </Icon>
        </StatusButton>
        <ZoomSlider type="range" aria-label="Zoom" min={0} max={100} defaultValue={59} />
        <StatusButton aria-label="Zoom in">
          <Icon w={16} h={16} stroke="#5f5f5f" sw={4}>
            <path d="M0 8h16M8 0v16" />
          </Icon>
        </StatusButton>
        <ZoomValue>170%</ZoomValue>
      </ZoomControls>
    </StatusSide>
  </StatusBar>
);

/* ---------- Dock icons ---------- */

const Tile = ({ fill, children, id, to }: { fill: string; to?: string; id: string; children?: React.ReactNode }) => (
  <svg width="82" height="82" viewBox="0 0 82 82">
    <defs>
      <linearGradient id={`g-${id}`} x1="0" y1="0" x2="0" y2="1">
        <stop offset="0" stopColor={fill} />
        <stop offset="1" stopColor={to || fill} />
      </linearGradient>
      <clipPath id={`c-${id}`}>
        <rect x="1" y="1" width="80" height="80" rx="18" />
      </clipPath>
    </defs>
    <rect x="1" y="1" width="80" height="80" rx="18" fill={`url(#g-${id})`} />
    <g clipPath={`url(#c-${id})`}>{children}</g>
  </svg>
);

const ChromeMark = ({ cx, cy, r }: { cx: number; cy: number; r: number }) => (
  <g transform={`translate(${cx} ${cy}) scale(${r / 35})`}>
    <circle r="35" fill="#f3bd42" />
    <path d="M-30.300-17.500A35 35 0 0 1 30.300-17.500L0-17.500-15 9z" fill="#d8473a" />
    <path d="M-30.300-17.500A35 35 0 0 0 0 35L15.200 8.800-15 9z" fill="#4ba055" />
    <path d="M30.300-17.500A35 35 0 0 1 0 35L15.200 8.800 0-17.500z" fill="#f3bd42" />
    <circle r="17.500" fill="#fff" />
    <circle r="13.500" fill="#3f78e4" />
  </g>
);

const Eclipse = () => (
  <svg width="100" height="92" viewBox="0 0 100 92">
    <path d="M46 1A45 45 0 0 0 46 91z" fill="#e89b3c" />
    <circle cx="54" cy="46" r="45" fill="#63726c" />
    <circle cx="55" cy="46" r="43" fill="#2b2150" stroke="#0d0a1e" strokeWidth="2" />
    <path d="M27 49h56a28 28 0 0 1-56 0z" fill="#3d2e7a" />
    <path d="M14 33h82v6H14zM12 43h86v6H12zM14 53h82v6H14z" fill="#fff" />
  </svg>
);

const Office = ({ id, letter, c }: { id: string; letter: string; c: string[] }) => (
  <Tile id={id} fill="#ffffff">
    {id === "ppt" ? (
      <>
        <circle cx="44" cy="41" r="27" fill={c[2]} />
        <path d="M44 14a27 27 0 0 1 27 27H44z" fill={c[1]} />
        <path d="M44 14v27H17a27 27 0 0 1 27-27z" fill={c[0]} />
      </>
    ) : (
      <>
        <path d="M22 14h45v14H22z" fill={c[0]} />
        <path d="M22 28h45v13H22z" fill={c[1]} />
        <path d="M22 41h45v13H22z" fill={c[2]} />
        <path d="M22 54h45v14H22z" fill={c[3]} />
        {id === "xls" && <path d="M22 14h22v27H22z" fill="#4aa56d" />}
      </>
    )}
    <rect x="8" y="26" width="30" height="30" rx="3" fill={c[4]} />
    <text x="23" y="49" fontSize="23" fontWeight="700" fontFamily="Open Sans, sans-serif" textAnchor="middle" fill="#fff">
      {letter}
    </text>
  </Tile>
);

const petals = ["#f19a37", "#e9d53b", "#b7cf4b", "#71b77b", "#6ea3d8", "#8a78b8", "#c075a8", "#ea5a4d"];
const pads = ["#7ddf64", "#f3b73c", "#e58a34", "#cf3a2f", "#8e9499", "#e84d67", "#8f4bc4", "#3b82e8", "#63c9a4"];

const dock: { name: string; running?: boolean; badge?: string; art: React.ReactNode }[] = [
  {
    name: "Finder",
    running: true,
    art: (
      <Tile id="finder" fill="#55c3f7" to="#3a70ea">
        <path d="M45 0q-11 26-10 48h12q-1 18 4 34h31V0z" fill="#e3e7f0" />
        <path d="M22 24v7M60 24v7" stroke="#20304a" strokeWidth="4" strokeLinecap="round" />
        <path d="M17 55q24 20 48 0" fill="none" stroke="#14203a" strokeWidth="3" strokeLinecap="round" />
      </Tile>
    ),
  },
  {
    name: "Launchpad",
    art: (
      <Tile id="launch" fill="#d7d9d4" to="#cbcdc8">
        {pads.map((c, i) => (
          <rect key={c} x={14 + (i % 3) * 20} y={15 + Math.floor(i / 3) * 20} width="15" height="15" rx="4" fill={c} />
        ))}
      </Tile>
    ),
  },
  {
    name: "Safari",
    art: (
      <Tile id="safari" fill="#ffffff" to="#dcdcdc">
        <circle cx="41" cy="41" r="35" fill="#3a8ee9" />
        <circle cx="41" cy="41" r="31" fill="none" stroke="#cfe4fa" strokeWidth="4" strokeDasharray="1 3" />
        <path d="M65 21L45 45l-8-8z" fill="#e2453b" />
        <path d="M19 62l18-25 8 8z" fill="#f3f3f3" />
      </Tile>
    ),
  },
  {
    name: "Calendar",
    art: (
      <Tile id="cal" fill="#ffffff" to="#f3f3f3">
        <path d="M0 0h82v26H0z" fill="#e25c50" />
        <text x="41" y="19" fontSize="15" fontWeight="600" fontFamily="Inter, sans-serif" textAnchor="middle" fill="#fff">SEP</text>
        <text x="41" y="69" fontSize="47" fontWeight="300" fontFamily="Inter, sans-serif" textAnchor="middle" fill="#222">20</text>
      </Tile>
    ),
  },
  {
    name: "Notes",
    running: true,
    art: (
      <Tile id="notes" fill="#fbfbfa" to="#ecebe7">
        <path d="M0 0h82v21H0z" fill="#f6cf4e" />
        <path d="M0 22h82M0 41h82M0 62h82" stroke="#d5d4d0" strokeWidth="2" />
        <path d="M2 25h80" stroke="#b0afab" strokeWidth="2" strokeDasharray="2 2" />
      </Tile>
    ),
  },
  {
    name: "Pages",
    art: (
      <Tile id="pages" fill="#f3b13f" to="#ee8e37">
        <path d="M20 69h49" stroke="#f9d09a" strokeWidth="3" />
        <path d="M14 68l5-13L60 16q6-2 5 4L26 63z" fill="#fbfbfb" />
        <path d="M14 68l3-8 4 4z" fill="#8a5a2a" />
        <path d="M36 40l6 6" stroke="#9a9a9a" strokeWidth="2" />
      </Tile>
    ),
  },
  {
    name: "App Store",
    art: (
      <Tile id="store" fill="#3fa3ee" to="#2a5bd9">
        <g stroke="#fff" strokeWidth="7" strokeLinecap="round">
          <path d="M45 19L27 50M36 19l25 43M16 51h28M56 51h10M23 58l-2 4" />
        </g>
      </Tile>
    ),
  },
  {
    name: "Chrome",
    running: true,
    art: (
      <Tile id="chrome" fill="#ffffff" to="#f4f4f4">
        <ChromeMark cx={41} cy={41} r={34} />
      </Tile>
    ),
  },
  {
    name: "Settings",
    running: true,
    badge: "1",
    art: (
      <Tile id="settings" fill="#cfd6da" to="#8e8f90">
        <circle cx="41" cy="41" r="35" fill="#2c2d2f" />
        <circle cx="41" cy="41" r="31" fill="none" stroke="#b2b5b7" strokeWidth="4" strokeDasharray="2 2" />
        <circle cx="41" cy="41" r="24" fill="#47494b" stroke="#8d9092" strokeWidth="5" />
        <circle cx="41" cy="41" r="14" fill="#2e2f31" stroke="#77797b" strokeWidth="3" />
        <path d="M41 41h26M41 41L28 18M41 41L28 64" stroke="#c1c4c6" strokeWidth="4" />
      </Tile>
    ),
  },
  {
    name: "Spotify",
    running: true,
    art: (
      <svg width="84" height="84" viewBox="0 0 84 84">
        <circle cx="42" cy="42" r="41" fill="#65d46e" />
        <g fill="none" stroke="#121812" strokeLinecap="round">
          <path d="M17 29q27-8 51 6" strokeWidth="8" />
          <path d="M19 43q23-7 44 6" strokeWidth="6.500" />
          <path d="M21 56q19-5 37 5" strokeWidth="5" />
        </g>
      </svg>
    ),
  },
  {
    name: "Pencil",
    art: (
      <Tile id="pencil" fill="#4d76f3">
        <g stroke="#15181f" strokeWidth="2" strokeLinejoin="round">
          <path d="M18 65l2-17 33-31 13 13-34 30z" fill="#eda646" />
          <path d="M18 65l2-17 12 12z" fill="#f9e2c3" />
          <path d="M18 65l1-6 4 4z" fill="#15181f" />
          <path d="M45 25l8-8q10-5 13 4 1 5-2 9l-8 7z" fill="#c3c6cc" />
          <path d="M27 54l25-22" />
        </g>
      </Tile>
    ),
  },
  {
    name: "Photos",
    art: (
      <Tile id="photos" fill="#ffffff">
        {petals.map((c, i) => (
          <rect key={c} x="31" y="6" width="20" height="34" rx="10" fill={c} opacity=".85" transform={`rotate(${i * 45} 41 41)`} />
        ))}
      </Tile>
    ),
  },
  {
    name: "VPN",
    art: (
      <svg width="90" height="104" viewBox="0 0 90 104">
        <defs>
          <radialGradient id="globe" cx=".4" cy=".25" r=".8">
            <stop offset="0" stopColor="#c4e0fb" />
            <stop offset=".5" stopColor="#66acf3" />
            <stop offset="1" stopColor="#3f86e0" />
          </radialGradient>
        </defs>
        <ellipse cx="41" cy="95" rx="41" ry="7" fill="#86938f" />
        <circle cx="40" cy="40" r="35" fill="#a3cbf6" />
        <circle cx="40" cy="37" r="32" fill="url(#globe)" />
        <path d="M11 26q9-19 28-20l6 8-12 6-4 11-9 2-5 8z" fill="#e2f0fd" />
        <path d="M22 38l12 4 5 8-8 22-6-16zM53 9l13 9 4 11-11 2-6-8z" fill="#3f86dc" opacity=".6" />
        <path d="M16 88h48v7H16z" fill="#c8c8c8" />
        <path d="M35 76h9v11h7v11H29V87h6z" fill="#ef9a4a" />
        <path d="M64 36V26q8-15 17 0v10" fill="none" stroke="#b9bdc2" strokeWidth="4" />
        <rect x="60" y="33" width="26" height="21" rx="2" fill="#d79a4b" />
        <path d="M60 38h26M60 43h26M60 48h26" stroke="#f0c583" strokeWidth="2" />
      </svg>
    ),
  },
  { name: "Eclipse", art: <Eclipse /> },
  { name: "Excel", art: <Office id="xls" letter="X" c={["#5fc088", "#3f9a5f", "#3a7d4b", "#2c5c38", "#2f7d47"]} /> },
  { name: "PowerPoint", art: <Office id="ppt" letter="P" c={["#dd7050", "#ef937a", "#c9573a", "", "#bb4327"]} /> },
  { name: "Word", running: true, art: <Office id="doc" letter="W" c={["#5ba4ea", "#3a78d0", "#2c58b5", "#1f3d8a", "#2450ae"]} /> },
  {
    name: "OBS",
    art: (
      <Tile id="obs" fill="#1a2156" to="#0f1433">
        <circle cx="41" cy="40" r="31" fill="#262329" stroke="#f3f3f3" strokeWidth="3" />
        <g fill="none" stroke="#dedede" strokeWidth="4" strokeLinecap="round">
          <path d="M41 38Q25 32 28 15M42 38q14-12 25 2M42 38q4 18-15 24" />
        </g>
      </Tile>
    ),
  },
  {
    name: "Streamlabs",
    art: (
      <Tile id="slobs" fill="#a9f2d8" to="#8ee2c4">
        <path d="M13 36q1-17 18-20" fill="none" stroke="#16282d" strokeWidth="6" strokeLinecap="round" />
        <rect x="22" y="27" width="46" height="39" rx="10" fill="#1d3138" />
        <path d="M42 46v8M54 46v8" stroke="#8ee2c4" strokeWidth="6" strokeLinecap="round" />
      </Tile>
    ),
  },
  { name: "|", art: null },
  {
    name: "FaceTime",
    art: (
      <Tile id="facetime" fill="#7fe77c" to="#55be45">
        <rect x="13" y="23" width="39" height="36" rx="9" fill="#f1f6f0" />
        <path d="M54 37l14-9v26l-14-9z" fill="#d7efd3" />
      </Tile>
    ),
  },
  {
    name: "Battle.net",
    art: (
      <svg width="100" height="100" viewBox="0 0 100 100">
        <circle cx="50" cy="50" r="50" fill="#2e6fd8" />
        <g fill="#fff">
          <path d="M33 44C30 26 36 16 41 16c7 0 14 12 18 28l-4-1C51 30 45 22 42 23c-4 1-5 10-4 21z" />
          <path d="M14 40c20-9 46-8 60 3 14 12 12 26-10 26l2-5c12-1 13-9 3-16-13-9-35-10-55-5z" />
          <path d="M31 56c-9 14-10 25 0 24 14-3 30-22 39-54 6 22-10 58-35 62-18 1-16-16-4-32z" />
          <path d="M34 40c2 16 10 32 26 45-18-9-28-26-29-45z" />
        </g>
      </svg>
    ),
  },
  { name: "Eclipse IDE", art: <Eclipse /> },
  { name: "|", art: null },
  {
    name: "Chrome window",
    art: (
      <svg width="96" height="96" viewBox="0 0 96 96">
        <path d="M1 22h94v54H1z" fill="#fcfcfd" />
        <path d="M1 22h94v3H1z" fill="#b7b9bd" />
        <path d="M10 27h74" stroke="#b9d2f2" strokeWidth="2" />
        <text x="48" y="46" fontSize="8" fontFamily="Lato, sans-serif" textAnchor="middle" fill="#4f7fe0">Google</text>
        <path d="M32 57h34M32 64h34" stroke="#8c8f94" strokeWidth="3" strokeDasharray="2 6" />
        <rect x="62" y="66" width="30" height="28" rx="7" fill="#f5f5f5" />
        <ChromeMark cx={77} cy={80} r={13} />
      </svg>
    ),
  },
  {
    name: "Trash",
    art: (
      <svg width="80" height="96" viewBox="0 0 80 96">
        <path d="M6 16l8-10 10 4 8-8 10 6 12-6 8 10 10 2-4 10H8z" fill="#d7d9da" />
        <path d="M18 12l8-4 6 8-8 6zM46 8l8 6-4 8-8-4z" fill="#555a60" />
        <path d="M30 10l8 2-2 8-8-2z" fill="#6bbfd6" />
        <path d="M54 16l8 2-4 6z" fill="#c96a54" />
        <path d="M4 15q36 14 72 0l-9 70q-4 9-27 9T13 85z" fill="#dfe0df" opacity=".97" />
        <path d="M22 26q10 30 4 60M48 24q-8 30 4 62" stroke="#e8e9e8" strokeWidth="8" fill="none" opacity=".6" />
      </svg>
    ),
  },
];

const MacDock = () => (
  <DockArea>
    <Dock>
      {dock.map((d, i) =>
        d.name === "|" ? (
          <DockRule key={i} />
        ) : (
          <DockItem key={d.name} aria-label={d.name}>
            {d.art}
            {d.badge && <AlertBadge>{d.badge}</AlertBadge>}
            {d.running && <RunningDot />}
          </DockItem>
        )
      )}
    </Dock>
  </DockArea>
);

export default function App() {
  return (
    <Desktop>
      <GlobalStyle />
      <Menu />
      <DarkWindow aria-hidden />
      <BrowserWindow aria-label="Browser">
        <BrowserTabs />
        <BrowserToolbar />
        <BrowserBody>
          <BrowserColumn />
          <BrowserColumn>
            <CommitChoice>
              <Icon w={28} h={28} stroke="#4b4d50">
                <circle cx="14" cy="14" r="12" />
              </Icon>
              <Icon w={28} h={28} stroke="#3b3d40" sw={3}>
                <circle cx="6" cy="6" r="4" />
                <circle cx="6" cy="23" r="4" />
                <circle cx="22" cy="23" r="4" />
                <path d="M6 10v9M22 19V9q0-4-6-4M19 1l-4 4 4 4" />
              </Icon>
              <span>
                Create a <b>new branch</b> for this commit and start a pull request. <a href="#pulls">Learn more about pull requests.</a>
              </span>
            </CommitChoice>
          </BrowserColumn>
          <BrowserColumn />
        </BrowserBody>
      </BrowserWindow>
      <WordWindow aria-label="Word">
        <WindowTitle />
        <RibbonTabs />
        <RibbonTools />
        <Canvas>
          <Page>
            <p>
              The average gym goer does not have an easy way to know <Grammar>weather</Grammar> or not the gym is crowded unless they physically go.
            </p>
            <BlankLine />
            <p>Michael Carson</p>
            <p>Shiv Patel</p>
            <p>Andrew Erdmann</p>
            <p>Landon Story</p>
          </Page>
        </Canvas>
        <Status />
      </WordWindow>
      <MacDock />
    </Desktop>
  );
}
